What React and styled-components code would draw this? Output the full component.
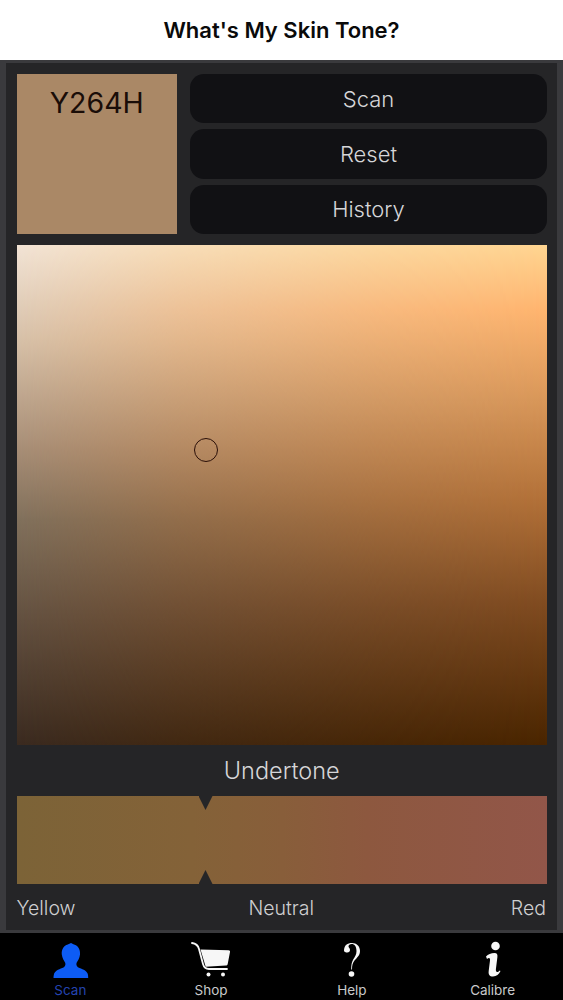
import React from "react";
import styled, { createGlobalStyle } from "styled-components";

const Global = createGlobalStyle`
  html, body { margin: 0; padding: 0; background: #000; }
  body { font-family: Inter, "Liberation Sans", sans-serif; }
  * { box-sizing: border-box; }
`;
const Page = styled.div`
  width: 563px; height: 1000px; display: flex; flex-direction: column; overflow: hidden;
`;
const Header = styled.header`
  height: 60px; flex: none; background: #fff; display: flex; align-items: center; justify-content: center;
  font-size: 22px; font-weight: 600; color: #0a0a0a;
`;
const Panel = styled.main`
  height: 873px; flex: none; background: #252527; border: solid #3a3a3d; border-width: 3px 6px;
  padding: 11px 10px 0 10.5px; display: flex; flex-direction: column;
`;
const TopRow = styled.div`
  display: flex; gap: 13px; height: 160px; flex: none;
`;
const Swatch = styled.div`
  width: 160.5px; height: 160px; flex: none; background: #aa8866; color: #1a0d08;
  font-size: 28.5px; text-align: center; padding-top: 11px; line-height: 36px;
`;
const ButtonStack = styled.div`
  flex: 1; display: flex; flex-direction: column; gap: 6px;
`;
const ActionButton = styled.button`
  height: 49.5px; border: 0; border-radius: 14px; background: #111114; color: #d6d6d8;
  font-family: inherit; font-size: 22px; font-weight: 300; padding: 0;
`;
const Plane = styled.div`
  position: relative; margin-top: 11px; width: 530.5px; height: 500px; flex: none;
  background: linear-gradient(180deg, #ffd591 0%, #ffb56f 13%, #d99759 31%, #b37138 51%, #804b20 72%, #4a2500 100%);
  &::before {
    content: ""; position: absolute; inset: 0;
    background: linear-gradient(180deg, #f2e3d5 0%, #d6c0a8 19%, #a68d76 41%, #80705c 55%, #625040 75%, #3a2a1f 100%);
    mask-image: linear-gradient(90deg, #000 0%, rgba(0,0,0,.58) 30%, rgba(0,0,0,.22) 68%, transparent 100%);
  }
`;
const Marker = styled.div`
  position: absolute; left: 177px; top: 193px; width: 24px; height: 24px; border-radius: 50%;
  border: 1.5px solid #2a0f08;
`;
const Title = styled.div`
  height: 51px; flex: none; display: flex; align-items: center; justify-content: center;
  color: #d6d6d8; font-size: 23.5px; font-weight: 300;
`;
const Strip = styled.div`
  position: relative; width: 530.5px; height: 88px; flex: none;
  background: linear-gradient(90deg, #7c6337 0%, #846238 33%, #885e3a 50%, #8d583f 66%, #925649 100%);
`;
const Notch = styled.div`
  position: absolute; left: 182px; width: 14px; height: 14px; background: #252527;
  ${p => p.$bottom
    ? "bottom: 0; clip-path: polygon(50% 0, 100% 100%, 0 100%);"
    : "top: 0; clip-path: polygon(0 0, 100% 0, 50% 100%);"}
`;
const Scale = styled.div`
  display: grid; grid-template-columns: 1fr auto 1fr; align-items: center; height: 47px; flex: none;
  color: #cfcfd1; font-size: 19.5px; font-weight: 300; padding: 0 1px 0 0;
`;
const ScaleEnd = styled.span`
  text-align: ${p => (p.$right ? "right" : "left")};
`;
const TabBar = styled.nav`
  flex: 1; background: #000; display: grid; grid-template-columns: repeat(4, 1fr);
`;
const Tab = styled.div`
  display: flex; flex-direction: column; align-items: center; justify-content: flex-end; padding-bottom: 2px;
  color: ${p => (p.$active ? "#2444b0" : "#c9c9cb")}; font-size: 13.5px;
`;
const TabIcon = styled.svg`
  width: 44px; height: 42px; display: block; margin-bottom: 2px;
`;

const PersonIcon = () => (
  <TabIcon viewBox="0 0 44 42" fill="#0d5cf5">
    <path d="M23 5l3 1.500c4 1 6.500 5 6 10-.4 3.500-2 6-3.500 8.500-.5 2.500.5 4 3 5 4 1.500 8 3 8.500 7 .1 1 .2 2 .2 3H5.500c0-1 .1-2 .3-3 .7-4 4.500-5.500 8.500-7 2.500-1 3.500-2.500 3-5-1.500-2.500-3-5-3.500-8.500-.5-5 2-9 6-10z" />
  </TabIcon>
);
const CartIcon = () => (
  <TabIcon viewBox="0 0 44 42" fill="#f7f7f7">
    <path d="M3 5c4 .5 6 2 7 6l4 15c.8 3 2.500 5 6 5h18" fill="none" stroke="#f7f7f7" strokeWidth="1.800" strokeLinecap="round" />
    <path d="M11.500 11.500l28 .8c1.300 0 1.700.8 1.500 1.800l-2.300 11.800c-.2 1-1 1.500-2 1.600l-20 1.200z" />
    <circle cx="19.500" cy="36.500" r="2" /><circle cx="34" cy="36.500" r="2" />
  </TabIcon>
);
const HelpIcon = () => (
  <TabIcon viewBox="0 0 44 42" fill="#f7f7f7">
    <path d="M14 13c0-6 3.500-8 8-8 4.500 0 8 3 8 8 0 4.500-3 6.500-5.500 9.500-2 2.500-2.500 5-2.500 9h-.8c0-4.500.4-7 2-10 1.800-3 3.300-5 3.300-8.500 0-4.500-2-7-4.800-7-2 0-3.200 1.300-3.200 2.500 0 1 1.500 1.500 1.500 3.500 0 1.500-1 2.500-2.700 2.500-1.500 0-3.300-.6-3.300-1.500z" />
    <circle cx="21.500" cy="36" r="2.800" />
  </TabIcon>
);
const InfoIcon = () => (
  <TabIcon viewBox="0 0 44 42" fill="#f7f7f7">
    <circle cx="24.500" cy="8" r="4.300" />
    <path d="M15 18.500c2-2 5-3.500 8.500-3.500 2.500 0 3.200 1.500 2.900 4l-1.500 12c-.2 2 .3 3 1.300 3s2-.7 2.500-1.500l.8.500c-1.500 3-4 5.500-7.500 5.500-3.500 0-4.800-2-4.300-5.500l1.300-10.500c.2-1.500-.2-2.500-1-2.500-.6 0-1.300.4-2 1z" />
  </TabIcon>
);

export default function App() {
  return (
    <Page>
      <Global />
      <Header>What's My Skin Tone?</Header>
      <Panel>
        <TopRow>
          <Swatch>Y264H</Swatch>
          <ButtonStack>
            <ActionButton>Scan</ActionButton>
            <ActionButton>Reset</ActionButton>
            <ActionButton>History</ActionButton>
          </ButtonStack>
        </TopRow>
        <Plane><Marker /></Plane>
        <Title>Undertone</Title>
        <Strip><Notch /><Notch $bottom /></Strip>
        <Scale><ScaleEnd>Yellow</ScaleEnd><span>Neutral</span><ScaleEnd $right>Red</ScaleEnd></Scale>
      </Panel>
      <TabBar>
        <Tab $active><PersonIcon />Scan</Tab>
        <Tab><CartIcon />Shop</Tab>
        <Tab><HelpIcon />Help</Tab>
        <Tab><InfoIcon />Calibre</Tab>
      </TabBar>
    </Page>
  );
}
